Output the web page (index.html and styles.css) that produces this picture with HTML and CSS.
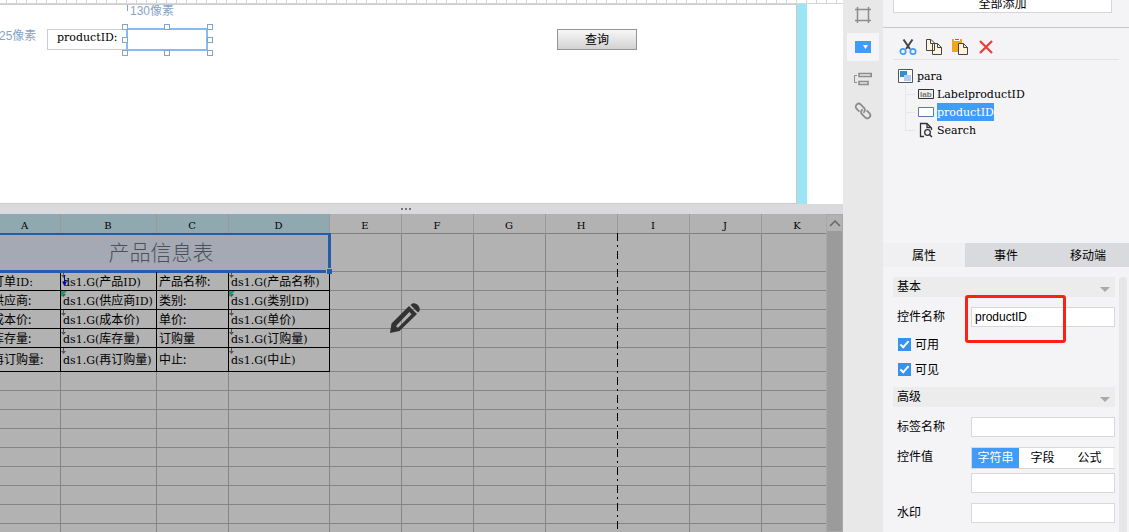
FILE: index.html
```html
<!DOCTYPE html>
<html lang="zh-CN">
<head>
    <meta charset="UTF-8">
    <meta name="viewport" content="width=device-width, initial-scale=1.0">
    <title>产品信息表</title>
    <link rel="stylesheet" href="styles.css">
</head>

<body>
    <main class="editor">
        <!-- parameter pane -->
        <section class="param">
            <div class="ruler"></div>
            <div class="stage">
                <div class="canvas">
                    <span class="measure measure-x">130像素</span>
                    <span class="measure measure-y">25像素</span>
                    <label class="w-label" for="w-product">productID:</label>
                    <div class="w-selected">
                        <input type="text" id="w-product">
                        <i class="handle l t"></i><i class="handle c t"></i><i class="handle r t"></i>
                        <i class="handle l m"></i><i class="handle r m"></i>
                        <i class="handle l b"></i><i class="handle c b"></i><i class="handle r b"></i>
                    </div>
                    <button class="w-search" type="button">查询</button>
                </div>
                <div class="edge"></div>
            </div>
        </section>

        <div class="splitter"><i></i><i></i><i></i></div>

        <!-- report grid -->
        <section class="sheet">
            <div class="cells">
                <table>
                    <colgroup>
                        <col class="col-a"><col class="col-b"><col class="col-c"><col class="col-d">
                        <col><col><col><col><col><col><col>
                    </colgroup>
                    <thead>
                        <tr>
                            <th class="on">A</th><th class="on">B</th><th class="on">C</th><th class="on">D</th>
                            <th>E</th><th>F</th><th>G</th><th>H</th><th>I</th><th>J</th><th>K</th>
                        </tr>
                    </thead>
                    <tbody>
                        <tr class="row-title">
                            <td class="title" colspan="4">产品信息表<i class="grip"></i></td>
                            <td></td><td></td><td></td><td></td><td></td><td></td><td></td>
                        </tr>
                        <tr class="data">
                            <td><b>订单</b>ID:</td><td class="ds parent">ds1.G(<b>产品</b>ID)</td><td><b>产品名称:</b></td><td class="ds">ds1.G(<b>产品名称</b>)</td>
                            <td></td><td></td><td></td><td></td><td></td><td></td><td></td>
                        </tr>
                        <tr class="data">
                            <td><b>供应商:</b></td><td class="ds dict">ds1.G(<b>供应商</b>ID)</td><td><b>类别:</b></td><td class="ds dict">ds1.G(<b>类别</b>ID)</td>
                            <td></td><td></td><td></td><td></td><td></td><td></td><td></td>
                        </tr>
                        <tr class="data">
                            <td><b>成本价:</b></td><td class="ds">ds1.G(<b>成本价</b>)</td><td><b>单价:</b></td><td class="ds">ds1.G(<b>单价</b>)</td>
                            <td></td><td></td><td></td><td></td><td></td><td></td><td></td>
                        </tr>
                        <tr class="data">
                            <td><b>库存量:</b></td><td class="ds">ds1.G(<b>库存量</b>)</td><td><b>订购量</b></td><td class="ds">ds1.G(<b>订购量</b>)</td>
                            <td></td><td></td><td></td><td></td><td></td><td></td><td></td>
                        </tr>
                        <tr class="data tall">
                            <td><b>再订购量:</b></td><td class="ds">ds1.G(<b>再订购量</b>)</td><td><b>中止:</b></td><td class="ds">ds1.G(<b>中止</b>)</td>
                            <td></td><td></td><td></td><td></td><td></td><td></td><td></td>
                        </tr>
                        <tr><td></td><td></td><td></td><td></td><td></td><td></td><td></td><td></td><td></td><td></td><td></td></tr>
                        <tr><td></td><td></td><td></td><td></td><td></td><td></td><td></td><td></td><td></td><td></td><td></td></tr>
                        <tr><td></td><td></td><td></td><td></td><td></td><td></td><td></td><td></td><td></td><td></td><td></td></tr>
                        <tr><td></td><td></td><td></td><td></td><td></td><td></td><td></td><td></td><td></td><td></td><td></td></tr>
                        <tr><td></td><td></td><td></td><td></td><td></td><td></td><td></td><td></td><td></td><td></td><td></td></tr>
                        <tr><td></td><td></td><td></td><td></td><td></td><td></td><td></td><td></td><td></td><td></td><td></td></tr>
                        <tr><td></td><td></td><td></td><td></td><td></td><td></td><td></td><td></td><td></td><td></td><td></td></tr>
                        <tr><td></td><td></td><td></td><td></td><td></td><td></td><td></td><td></td><td></td><td></td><td></td></tr>
                        <tr><td></td><td></td><td></td><td></td><td></td><td></td><td></td><td></td><td></td><td></td><td></td></tr>
                    </tbody>
                </table>
                <div class="page-break"></div>
                <svg class="pencil" width="32" height="32" viewBox="0 0 32 32">
                    <path fill="#333" fill-rule="evenodd" d="M1 31 L2.5 21.5 L20 4 L28 12 L10.5 29 Z M7.5 23.5 C7 25 8 26 9.5 25.2 L22.5 12.3 L20.3 10.1 Z"/>
                    <path fill="#333" d="M21.5 3 L23 1.8 C26 0 32 4 30.5 9 L29 10.5 Z"/>
                </svg>
            </div>
            <div class="vscroll">
                <button type="button" aria-label="向上滚动">
                    <svg width="12" height="8" viewBox="0 0 12 8"><path d="M1 7 L6 2 L11 7" fill="none" stroke="#666" stroke-width="1.5"/></svg>
                </button>
                <div class="thumb"></div>
            </div>
        </section>
    </main>

    <nav class="strip">
        <button type="button" aria-label="单元格">
            <svg width="18" height="18" viewBox="0 0 18 18"><path d="M1 3.5H17M1 14.5H17M3.5 1V17M14.5 1V17" fill="none" stroke="#8c8c8c" stroke-width="1.5"/></svg>
        </button>
        <button type="button" class="active" aria-label="控件">
            <svg width="18" height="18" viewBox="0 0 18 18"><path fill="#409cfb" d="M1 3H17V15H1Z"/><path fill="#fff" d="M9 7H14L11.5 11Z"/></svg>
        </button>
        <button type="button" aria-label="悬浮元素">
            <svg width="18" height="18" viewBox="0 0 18 18"><path d="M5 3.5H17.2V6.5H5ZM5 11.5H14V14.5H5Z" fill="none" stroke="#8c8c8c" stroke-width="1.6"/><path d="M3 5.5H.5V12.5H3" fill="none" stroke="#8c8c8c"/></svg>
        </button>
        <button type="button" aria-label="超级链接">
            <svg width="18" height="18" viewBox="0 0 18 18"><g transform="rotate(45 9 9)" fill="none" stroke="#8c8c8c" stroke-width="1.8"><path d="M7 12H3A3 3 0 0 1 3 6H7.5A3 3 0 0 1 10.3 10"/><path d="M11 6H15A3 3 0 0 1 15 12H10.5A3 3 0 0 1 7.7 8"/></g></svg>
        </button>
    </nav>

    <aside class="panel">
        <div class="add-bar"><button type="button">全部添加</button></div>

        <div class="tree-box">
            <div class="tools">
                <button type="button" aria-label="剪切">
                    <svg width="18" height="18" viewBox="0 0 18 18"><path d="M4.5 1.5L11 11M13.5 1.5L7 11" fill="none" stroke="#444" stroke-width="2"/><circle cx="4" cy="13.5" r="2.700" fill="none" stroke="#409cfb" stroke-width="1.7"/><circle cx="14" cy="13.5" r="2.700" fill="none" stroke="#409cfb" stroke-width="1.7"/></svg>
                </button>
                <button type="button" aria-label="复制">
                    <svg width="18" height="18" viewBox="0 0 18 18"><path d="M1.5 1.5H6L9.5 5V12.5H1.5ZM7.5 5.5H12.5L16.5 9.5V16.5H7.5Z" fill="#fff3dc" stroke="#444"/><path d="M5.5 1.5V5.5H9M12.5 5.5V9.5H16.5" fill="none" stroke="#444"/></svg>
                </button>
                <button type="button" aria-label="粘贴">
                    <svg width="18" height="18" viewBox="0 0 18 18"><path fill="#efa81c" d="M1 1H11V14H1Z"/><path fill="#fff" d="M3 1H9V3H3Z"/><path fill="#a86b18" d="M4 1H8V2H4Z"/><path d="M7.5 5.5H12.5L16.5 9.5V16.5H7.5Z" fill="#fff3dc" stroke="#444"/><path d="M12.5 5.5V9.5H16.5" fill="none" stroke="#444"/></svg>
                </button>
                <button type="button" aria-label="删除">
                    <svg width="18" height="18" viewBox="0 0 18 18"><path d="M3 3L15 15M15 3L3 15" fill="none" stroke="#ea3f3a" stroke-width="2.3"/></svg>
                </button>
            </div>
            <ul class="tree">
                <li><svg width="16" height="16" viewBox="0 0 16 16"><path d="M.5 1.5H14.5V14.5H.5Z" fill="#fff" stroke="#555"/><path fill="#2f8fcf" d="M2 3H9V9H2Z"/><path fill="#b4cdf5" d="M6 7H13V13H6Z"/></svg><span>para</span>
                    <ul>
                        <li><svg width="16" height="16" viewBox="0 0 16 16"><path d="M.5 3.5H15.5V12.5H.5Z" fill="#eee" stroke="#333"/><text x="2" y="11" font-size="8" fill="#777" font-family="Liberation Sans" font-weight="bold">lab</text></svg><span>LabelproductID</span></li>
                        <li><svg width="16" height="16" viewBox="0 0 16 16"><path d="M.5 3.5H15.5V12.5H.5Z" fill="#fff" stroke="#5878b0"/></svg><span class="picked">productID</span></li>
                        <li><svg width="16" height="16" viewBox="0 0 16 16"><path d="M6 14.5H2.5V1.5H9L13.5 6V8M9 1.5V5.5H13" fill="none" stroke="#333" stroke-width="1.3"/><circle cx="9.5" cy="10.5" r="2.800" fill="none" stroke="#333" stroke-width="1.3"/><path d="M11.5 12.5L14 15" stroke="#333" stroke-width="1.5"/></svg><span>Search</span></li>
                    </ul>
                </li>
            </ul>
        </div>

        <div class="tabs">
            <button type="button" class="active">属性</button>
            <button type="button">事件</button>
            <button type="button">移动端</button>
        </div>

        <div class="props">
            <form class="fields">
                <h3>基本</h3>
                <div class="field">
                    <label for="f-name">控件名称</label>
                    <div class="value marked"><input type="text" id="f-name" value="productID"></div>
                </div>
                <label class="check"><input type="checkbox" checked>可用</label>
                <label class="check"><input type="checkbox" checked>可见</label>

                <h3>高级</h3>
                <div class="field">
                    <label for="f-label">标签名称</label>
                    <div class="value"><input type="text" id="f-label"></div>
                </div>
                <div class="field">
                    <label for="f-value">控件值</label>
                    <div class="value">
                        <div class="segment">
                            <button type="button" class="active">字符串</button>
                            <button type="button">字段</button>
                            <button type="button">公式</button>
                        </div>
                        <input type="text" id="f-value">
                    </div>
                </div>
                <div class="field">
                    <label for="f-mark">水印</label>
                    <div class="value"><input type="text" id="f-mark"></div>
                </div>
            </form>
            <div class="rail"></div>
        </div>
    </aside>
</body>

</html>
```
FILE: styles.css
```css
*,
*::before,
*::after {
    box-sizing: border-box;
}

body {
    margin: 0;
    height: 100vh;
    overflow: hidden;
    display: grid;
    grid-template-columns: minmax(0, 1fr) 40px 246px;
    font: 12px/18px "Liberation Sans", "Noto Sans CJK SC", sans-serif;
    color: #000;
    background: #fff;
}

button,
input {
    font: inherit;
    color: inherit;
    margin: 0;
    padding: 0;
    border: 0;
    border-radius: 0;
    background: none;
    outline: none;
}

svg {
    display: block;
    flex: none;
}

.editor {
    display: flex;
    flex-direction: column;
    height: 100vh;
    overflow: hidden;
}

/* parameter pane */
.param {
    flex: none;
    height: 204px;
    display: flex;
    flex-direction: column;
}

.ruler {
    height: 4px;
    border-bottom: 1px solid #d6d6d9;
    background: repeating-linear-gradient(90deg, #fff 0 6px, #d6d6d9 6px 7px, #fff 7px 10px);
}

.stage {
    flex: 1;
    display: flex;
    padding-right: 36px;
}

.canvas {
    flex: 1;
    position: relative;
    overflow: hidden;
    border: 1px solid #ccc;
    border-left: 0;
}

.edge {
    width: 10px;
    background: #9ce5f4;
}

.measure {
    position: absolute;
    color: #86a5c6;
    line-height: 16px;
}

.measure-x {
    left: 127px;
    top: -2px;
    padding-left: 3px;
}

.measure-x::before {
    content: "";
    position: absolute;
    left: 0;
    top: 2px;
    height: 6px;
    border-left: 1px solid #86a5c6;
}

.measure-y {
    left: -1px;
    top: 23px;
}

.w-label {
    position: absolute;
    left: 47px;
    top: 24px;
    width: 80px;
    height: 21px;
    border: 1px solid #ccc;
    padding-left: 9px;
    font: 11px/15px "DejaVu Serif", serif;
}

.w-selected {
    position: absolute;
    left: 126px;
    top: 23px;
    width: 82px;
    height: 23px;
}

.w-selected input {
    display: block;
    width: 100%;
    height: 100%;
    border: 2px solid #86bbf5;
    background: #fff;
}

.handle {
    position: absolute;
    width: 6px;
    height: 6px;
    border: 1px solid #86a5c6;
    background: #fff;
}

.handle.l { left: -4px; }
.handle.c { left: 38px; }
.handle.r { right: -5px; }
.handle.t { top: -4px; }
.handle.m { top: 9px; }
.handle.b { bottom: -5px; }

.w-search {
    position: absolute;
    left: 557px;
    top: 24px;
    width: 80px;
    height: 21px;
    border: 1px solid #949494;
    background: linear-gradient(#f7f7f7, #d2d2d2);
}

.splitter {
    flex: none;
    height: 10px;
    padding-right: 32px;
    display: flex;
    align-items: center;
    justify-content: center;
    gap: 2px;
    background: #dadadc;
}

.splitter i {
    width: 2px;
    height: 2px;
    background: #777;
}

/* report grid */
.sheet {
    flex: 1;
    min-height: 0;
    display: flex;
    background: #b2b2b2;
}

.cells {
    flex: 1;
    min-width: 0;
    position: relative;
    overflow: hidden;
}

table {
    width: 844px;
    margin-left: -10px;
    table-layout: fixed;
    border-collapse: separate;
    border-spacing: 0;
    font: 11px/15px "DejaVu Serif", "Noto Sans CJK SC", serif;
}

col { width: 72px; }
.col-a { width: 71px; }
.col-b { width: 96px; }
.col-d { width: 101px; }

th {
    height: 20px;
    padding: 3px 1px 0 0;
    font-weight: normal;
    font-size: 10px;
    border-right: 1px solid #999;
    border-bottom: 1px solid #808080;
}

th.on {
    background: #90a8b0;
}

td {
    height: 19px;
    padding: 0 0 0 2px;
    white-space: nowrap;
    border-right: 1px solid #858585;
    border-bottom: 1px solid #858585;
}

td b {
    font: 12px/15px "Noto Sans CJK SC", sans-serif;
}

.row-title td {
    height: 38px;
}

.row-title .title {
    position: relative;
    padding: 0 0 4px 3px;
    text-align: center;
    font: 300 21px/30px "Noto Sans CJK SC", sans-serif;
    color: #4c505a;
    background: #a5a9b3;
}

.title::after {
    content: "";
    position: absolute;
    inset: -1px -2px -2px 0;
    border: 3px solid #235ca8;
    border-width: 2px 3px 3px;
}

.grip {
    position: absolute;
    z-index: 1;
    right: -3px;
    bottom: -3px;
    width: 6px;
    height: 6px;
    border: 1px solid #b2b2b2;
    border-width: 1px 0 0 1px;
    background: #235ca8;
}

.data td:nth-child(-n+4) {
    border-color: #000;
}

.tall td {
    height: 24px;
}

.ds {
    position: relative;
}

/* expand arrow in the cell corner */
.ds::before {
    content: "";
    position: absolute;
    left: 0;
    top: 0;
    width: 5px;
    height: 6px;
    background: #555;
    clip-path: polygon(40% 0, 60% 0, 60% 50%, 100% 50%, 50% 100%, 0 50%, 40% 50%);
}

.dict::after {
    content: "";
    position: absolute;
    left: 0;
    top: 0;
    border-top: 6px solid #169c78;
    border-right: 6px solid transparent;
}

.parent::after {
    content: "";
    position: absolute;
    left: 1px;
    top: 3px;
    width: 5px;
    height: 11px;
    background: #0000c8;
    clip-path: polygon(40% 0, 60% 0, 60% 60%, 100% 60%, 50% 100%, 0 60%, 40% 60%);
}

.page-break {
    position: absolute;
    left: 617px;
    top: 19px;
    bottom: 0;
    width: 1px;
    background: repeating-linear-gradient(#000 0 8px, #b2b2b2 8px 12px, #000 12px 14px, #b2b2b2 14px 18px);
}

.pencil {
    position: absolute;
    left: 389px;
    top: 88px;
}

.vscroll {
    width: 17px;
    display: flex;
    flex-direction: column;
    border: 1px solid #a8a8a8;
}

.vscroll button {
    height: 16px;
    display: grid;
    place-items: center;
}

.thumb {
    flex: 1;
    background: #9b9b9b;
}

/* icon strip */
.strip {
    display: flex;
    flex-direction: column;
    align-items: center;
    gap: 4px;
    padding-top: 1px;
    background: #e8e8e8;
}

.strip button {
    width: 32px;
    height: 28px;
    display: grid;
    place-items: center;
}

.strip .active {
    background: #f5f5f8;
}

/* right panel */
.panel {
    display: flex;
    flex-direction: column;
    height: 100vh;
    overflow: hidden;
    background: #f4f4f7;
}

.add-bar {
    flex: none;
    height: 28px;
    padding: 0 17px 0 10px;
    border-bottom: 1px solid #c8c8c4;
}

.add-bar button {
    display: block;
    width: 100%;
    height: 22px;
    margin-top: -9px;
    padding-top: 3px;
    border: 1px solid #d6d6da;
    background: #fff;
}

.tree-box {
    flex: none;
    height: 215px;
    padding: 0 10px;
}

.tools {
    display: flex;
    gap: 8px;
    height: 32px;
    padding: 10px 6px 0;
    border-bottom: 1px solid #e2e2e5;
}

.tools button {
    width: 18px;
    height: 18px;
}

.tree,
.tree ul {
    margin: 0;
    padding: 0;
    list-style: none;
}

.tree {
    padding: 7px 0 0 5px;
    font: 11px/17px "DejaVu Serif", serif;
}

.tree li {
    display: flex;
    flex-wrap: wrap;
    align-items: center;
    column-gap: 3px;
}

.tree span {
    padding-top: 1px;
}

.tree ul {
    width: 100%;
    margin-left: 7px;
    padding-left: 13px;
    background:
        linear-gradient(#e6e6ea, #e6e6ea) no-repeat 0 0 / 1px 45px,
        linear-gradient(#e6e6ea, #e6e6ea) no-repeat 0 9px / 10px 1px,
        linear-gradient(#e6e6ea, #e6e6ea) no-repeat 0 27px / 10px 1px,
        linear-gradient(#e6e6ea, #e6e6ea) no-repeat 0 45px / 10px 1px;
}

.picked {
    color: #fff;
    background: #409cfb;
}

.tabs {
    flex: none;
    display: flex;
    height: 24px;
    background: #d9dadd;
}

.tabs button {
    flex: 1;
    padding-top: 1px;
}

.tabs .active {
    background: #f0f0f2;
}

.props {
    flex: 1;
    min-height: 0;
    display: flex;
    gap: 4px;
    padding: 10px 2px 0 10px;
}

.fields {
    flex: 1;
}

.rail {
    width: 8px;
    border-radius: 4px 4px 0 0;
    background: #e6e6e8;
}

h3 {
    position: relative;
    height: 20px;
    margin: 0 0 10px;
    padding-left: 4px;
    font: inherit;
    line-height: 20px;
    background: #ececec;
}

h3::after {
    content: "";
    position: absolute;
    right: 5px;
    top: 10px;
    border: 5px solid transparent;
    border-top-color: #aaa;
    border-bottom: 0;
}

.field {
    display: flex;
    margin-bottom: 10px;
    padding-left: 4px;
}

.field > label {
    width: 74px;
    line-height: 20px;
}

.value {
    flex: 1;
    position: relative;
}

.value input {
    display: block;
    width: 100%;
    height: 20px;
    padding: 0 3px;
    border: 1px solid #d8d8dc;
    background: #fff;
}

.marked::after {
    content: "";
    position: absolute;
    left: -6px;
    top: -12px;
    width: 101px;
    height: 48px;
    border: 3px solid #ff1f16;
    border-radius: 3px;
}

.check {
    display: flex;
    align-items: center;
    gap: 4px;
    height: 15px;
    margin-bottom: 10px;
    padding-left: 5px;
}

.check input {
    appearance: none;
    width: 13px;
    height: 13px;
    background: #3592ee;
    display: grid;
    place-items: center;
}

.check input:checked::after {
    content: "";
    width: 5px;
    height: 9px;
    margin-top: -2px;
    border: solid #fff;
    border-width: 0 2px 2px 0;
    transform: rotate(42deg);
}

.segment {
    display: flex;
    height: 22px;
    margin-bottom: 4px;
    padding-right: 2px;
    border: 1px solid #d8d8dc;
    border-right: 0;
}

.segment button {
    flex: 1;
    background: #fff;
}

.segment .active {
    color: #fff;
    background: #409cfb;
}
```
